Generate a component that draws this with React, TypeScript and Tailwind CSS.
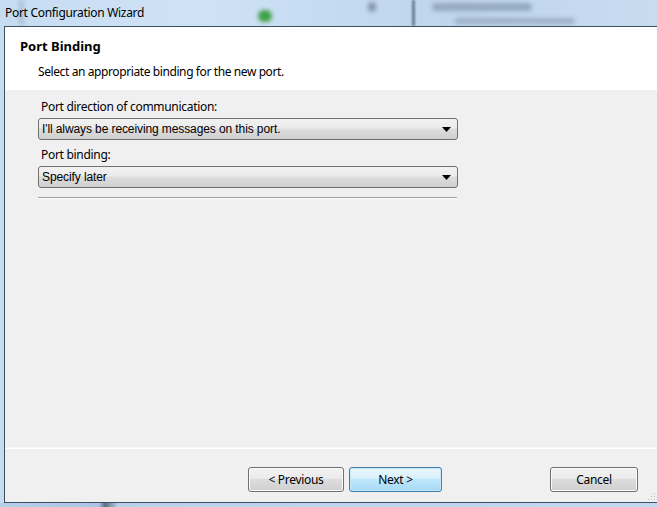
import React from "react";

const ui = { fontFamily: '"Noto Sans", "Open Sans", sans-serif' };
const combo = { fontFamily: '"Liberation Sans", "DejaVu Sans", sans-serif' };

function Arrow() {
  return (
    <svg width="9" height="5" viewBox="0 0 9 5" className="shrink-0">
      <path d="M0 0 H9 L4.5 5 Z" fill="#000" />
    </svg>
  );
}

function Combo({ text }: { text: string }) {
  return (
    <div className="flex h-[22px] w-[420px] items-center justify-between rounded-[3px] border border-[#707070] bg-[linear-gradient(#f2f2f2_0%,#ebebeb_45%,#dddddd_50%,#cfcfcf_100%)] pl-[3px] pr-[6px]">
      <span style={combo} className="text-[12px] tracking-[-0.1px] text-black leading-none">
        {text}
      </span>
      <Arrow />
    </div>
  );
}

function Btn({ label, w, focus }: { label: string; w: string; focus?: boolean }) {
  return (
    <div
      className={`${w} flex h-[25px] items-center justify-center rounded-[3px] border ${
        focus
          ? "border-[#3c7fb1] bg-[linear-gradient(#eaf6fd_0%,#d9f0fc_45%,#bee6fd_50%,#a7d9f5_100%)] shadow-[inset_0_0_0_1px_#c8e8fa]"
          : "border-[#707070] bg-[linear-gradient(#f2f2f2_0%,#ebebeb_45%,#dddddd_50%,#cfcfcf_100%)] shadow-[inset_0_0_0_1px_#fcfcfc]"
      }`}
    >
      <span style={ui} className="text-[12px] tracking-[-0.3px] text-black leading-none">
        {label}
      </span>
    </div>
  );
}

export default function App() {
  return (
    <div className="relative flex h-[507px] w-[657px] flex-col overflow-hidden bg-[linear-gradient(90deg,#c6dcf1_0%,#cfe3f6_30%,#c3d9ef_55%,#bfd5ec_70%,#c8dcf0_100%)]">
      {/* blurred background decorations behind the glass title bar */}
      <div className="absolute left-[258px] top-[10px] h-[12px] w-[14px] rounded-full bg-[#3da043] blur-[2px]" />
      <div className="absolute left-[368px] top-[2px] h-[10px] w-[8px] rounded-full bg-[#8797aa] blur-[2px]" />
      <div className="absolute left-[412px] top-0 h-[26px] w-[3px] bg-[#6b7d92] blur-[1px]" />
      <div className="absolute left-[432px] top-[3px] h-[8px] w-[100px] rounded bg-[#95a9c0] blur-[2px]" />
      <div className="absolute left-[455px] top-[18px] h-[6px] w-[120px] rounded bg-[#9cb0c6] blur-[2px]" />
      <div className="absolute left-[20px] top-0 h-[26px] w-[3px] bg-[#9fb4ca] blur-[2px]" />

      <div className="relative flex h-[26px] shrink-0 items-center pl-[5px]">
        <span style={ui} className="text-[12px] tracking-[-0.3px] text-black leading-none">
          Port Configuration Wizard
        </span>
      </div>

      <div className="relative ml-[4px] flex h-[477px] shrink-0 flex-col border-l border-t border-b border-[#3f4f63] bg-[#f0f0f0]">
        {/* header */}
        <div className="flex h-[63px] shrink-0 flex-col bg-white pl-[15px] pt-[11px]">
          <span style={ui} className="text-[13px] font-bold leading-[16px] text-black">
            Port Binding
          </span>
          <span style={ui} className="ml-[18px] mt-[10px] text-[12px] tracking-[-0.4px] leading-[16px] text-black">
            Select an appropriate binding for the new port.
          </span>
        </div>

        {/* content */}
        <div className="flex flex-col pl-[33px] pt-[9px]">
          <span style={ui} className="ml-[3px] text-[12px] tracking-[-0.3px] leading-[16px] text-black">
            Port direction of communication:
          </span>
          <div className="mt-[3px]">
            <Combo text="I'll always be receiving messages on this port." />
          </div>
          <span style={ui} className="ml-[3px] mt-[7px] text-[12px] tracking-[-0.3px] leading-[16px] text-black">
            Port binding:
          </span>
          <div className="mt-[3px]">
            <Combo text="Specify later" />
          </div>
          <div className="mt-[9px] h-px w-[419px] bg-[#a0a0a0]" />
          <div className="h-px w-[419px] bg-white" />
        </div>

        <div className="flex-1" />

        {/* footer */}
        <div className="h-px w-full bg-[#f7f7f7]" />
        <div className="h-px w-full bg-white" />
        <div className="flex h-[53px] items-start pl-[243px] pt-[18px]">
          <Btn label="< Previous" w="w-[96px]" />
          <div className="w-[5px]" />
          <Btn label="Next >" w="w-[93px]" focus />
          <div className="w-[108px]" />
          <Btn label="Cancel" w="w-[88px]" />
        </div>

        {/* resize grip */}
        <svg className="absolute bottom-[1px] right-[1px]" width="10" height="10" viewBox="0 0 10 10">
          {[
            [8, 2],
            [8, 5],
            [5, 5],
            [8, 8],
            [5, 8],
            [2, 8],
          ].map(([x, y], i) => (
            <rect key={i} x={x} y={y} width="1" height="1" fill="#b8b8b8" />
          ))}
        </svg>
      </div>

      <div className="h-[4px] bg-[linear-gradient(90deg,#b6d0ea_0%,#aac6e4_15%,#5e6f82_16%,#b9d2ec_18%,#c2d8ef_100%)]" />
    </div>
  );
}
